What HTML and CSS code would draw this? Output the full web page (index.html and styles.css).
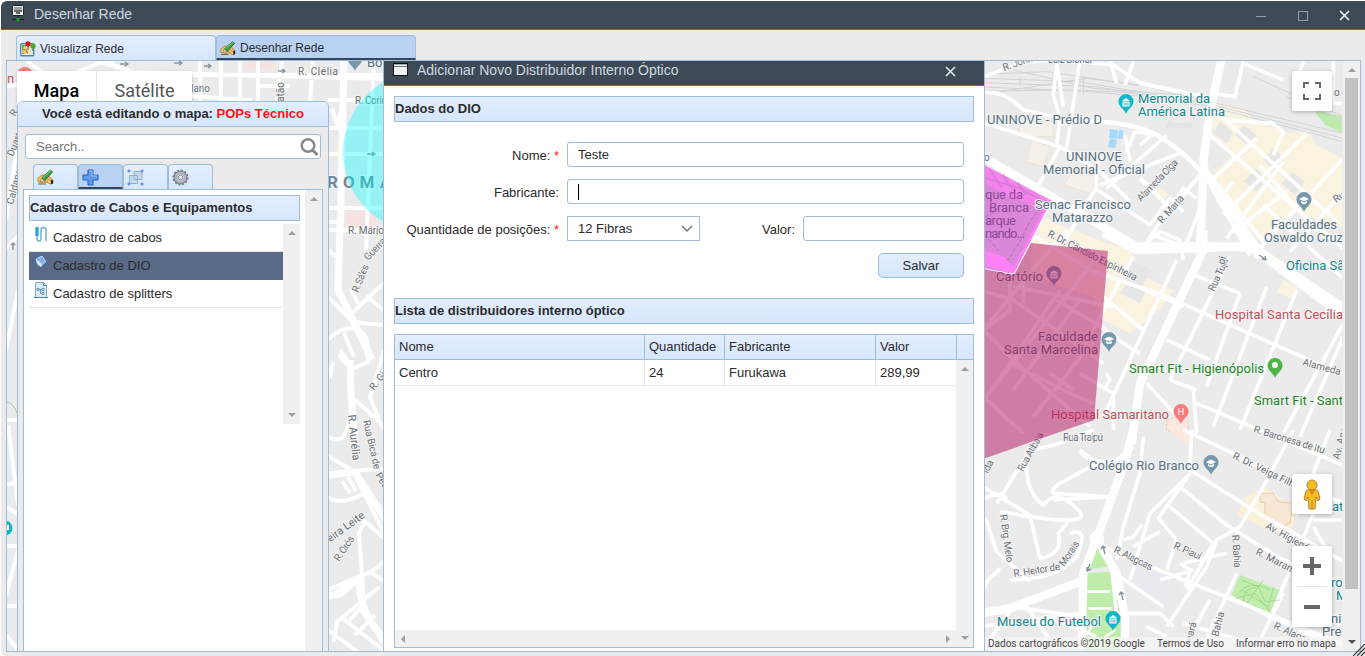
FILE: index.html
```html
<!DOCTYPE html>
<html lang="pt-BR">
<head>
<meta charset="utf-8">
<title>Desenhar Rede</title>
<link rel="stylesheet" href="styles.css">
</head>
<body>
<div class="window">
  <header class="titlebar">
    <svg class="title-icon" width="14" height="17" viewBox="0 0 14 17"><rect x="1.500" y=".5" width="11" height="10" rx="1" fill="#eee" stroke="#222"/><path d="M3 2h8v5H9v2H5V7H3z" fill="#666"/><path d="M4 2v3M6 2v3M8 2v3M10 2v3" stroke="#fff" stroke-width=".8"/><path d="M7 11v3M1 14.500h12" stroke="#1c2328" stroke-width="1.300"/><rect x="5.500" y="13" width="3" height="3" fill="#16a52c"/></svg>
    <h1>Desenhar Rede</h1>
    <svg class="win-buttons" width="100" height="14" viewBox="0 0 100 14"><path d="M2 8.500h10" stroke="#96a0a8"/><rect x="44.500" y="3.500" width="9" height="9" fill="none" stroke="#96a0a8"/><path d="M86 3l9 9M95 3l-9 9" stroke="#f4f6f7" stroke-width="1.600"/></svg>
  </header>

  <nav class="tabs">
    <div class="tab"><svg width="16" height="16" viewBox="0 0 16 16"><rect x=".7" y="2.700" width="13" height="12" rx="1" fill="#fff" stroke="#4786bd" stroke-width="1.400"/><path d="M2 4h4v9H2z" fill="#46ad36"/><path d="M4 4l6 6-5 4-3-3z" fill="#ebcb67"/><path d="M8 5l5 3v5l-4 1z" fill="#dbe7d0"/><path d="M2 8l4 1 2 4" stroke="#b87820" fill="none"/><path d="M8 5v4M13 6v4" stroke="#555"/><circle cx="8" cy="3" r="2.700" fill="#cd2020"/><circle cx="13" cy="5" r="2.700" fill="#55a529"/></svg>Visualizar Rede</div>
    <div class="tab active"><svg width="16" height="16" viewBox="0 0 17 16"><use href="#hand"/></svg>Desenhar Rede</div>
  </nav>

  <main class="workspace">
    <div class="map-view">
    <svg class="map" viewBox="7 61 1335 590">
      <defs>
        <g id="hand"><path d="M1 9l4-3 5 0 4 3 2 3v2l-3 1-3-2-4 1-5-1z" fill="#f8c873" stroke="#b87422" stroke-width=".8"/><path d="M9 9l5 3M7 11l4 2" stroke="#c07a22" stroke-width=".8"/><path d="M4.500 9l9-8 2 2-8 9z" fill="#37a143" stroke="#1c6a26" stroke-width=".8"/><path d="M6 8.500l8-7" stroke="#8edb80"/><path d="M3 12.500l1.500-3.500 3 3z" fill="#f5dcaa" stroke="#755" stroke-width=".5"/><path d="M1 15h8" stroke="#444" stroke-width=".8"/><path d="M14 11.500l2-1v4l-2 1z" fill="#222"/></g>
        <g id="pin"><path d="M0 12C-1.500 7-7.500 5-7.500-.5a7.500 7.500 0 0 1 15 0C7.500 5 1.500 7 0 12z"/></g>
        <g id="museum"><path d="M-4-1 0-4 4-1z" fill="#fff"/><path d="M-3 0h6v4h-6z" fill="none" stroke="#fff" stroke-width="1.200"/><path d="M-1 0v4M1 0v4" stroke="#fff"/></g>
        <g id="school"><path d="M-5-1 0-3.500 5-1 0 1.500z" fill="#fff"/><path d="M-3 1v2q3 2 6 0V1L0 2.500z" fill="#fff"/></g>
      </defs>
      <rect x="0" y="50" width="1365" height="610" fill="#ebebeb"/>
      <path d="M249 61h25v8h-28zM346 210l30 2v20l-31-4z" fill="#f6e3e1"/>

      <g class="roads">
        <path class="road" d="M0 88L40 81 75 73 104 61M27 61l20 15M108 61l30 18 54 17 60 4M98 61l35 11 250 7M192 75h190M200 61v40M221 61v40M240 61v40M258 61v40M282 61l-5 40M313 61l-3 42M260 86h30"/>
        <path class="road wide" d="M344 55L341 200 338 290 353 320 372 360"/>
        <path class="road" d="M328 100h60M328 128h60M328 154h60M328 208h60M328 230h60M374 60l-8 190M328 222h14M332 109l5 15 5-15M328 250q8 8 14 6M328 297l25 25 31 3M350 315l34-32M366 296l25 20M358 304l-7-15M328 340q14-15 28-11t12 28M344 333l10 24M340 350l10 14 1 35 4 62M339 355l8 10M352 369l16-7-1-14M384 350l-9 32-5 15 9 22M328 379q8-30 2-1M328 437q10 5 15 0l8-17M328 456l25 15 38-3M353 471l35 70M355 400l25 22 6 10M328 497q13 10 38-5M342 481l8 12M348 477l8 14M328 590l34-15-3-42 6-12 20 18M328 597l50-30 10-10M334 642l3-20 42-35M342 618l44 34M362 575l2 30 15 30M370 572l16 10M328 630l30 22M348 622l15-17M355 635l20-20"/>
        <path class="road wide" d="M328 475l27-3 32 50M328 596l12-2 18-15M358 578l5 32 24 35M350 360l1 35 5 66"/>
        <path class="road" d="M18 140L6 220M6 248l12-12M18 290L6 350M6 420h12M8 425l10 80M6 485l12-3M6 507l12 7M6 546h12M18 550L6 595M6 606h12M6 635l12 15"/>
      </g>
      <path d="M7 402q7 2 10 11" fill="none" stroke="#9fd2a0"/>
      <circle cx="25" cy="75" r="8" fill="#f67e7b"/>

      <!-- north-east quarter, three units per pixel -->
      <g transform="translate(980 55) scale(.33333)">
        <path d="M700 140L790 160 830 200 930 235 985 225 1010 270 1090 310V520L950 470 840 560 770 480 700 350 760 300 700 240z M540 400l25 15-15 25-25-20zM180 480l60 30 130 50 80 25 20 40-65 100-230-150z" fill="#faf3e0"/>
        <path d="M120 200h100v45h-105zM155 255l55 20-20 60-50-15zM280 350l75 15-25 50-80-25z" fill="#f5f0ea" stroke="#eee3d7" stroke-width="3"/>
        <path d="M390 222l24 4-3 25-24-3M417 226h14l-4 25h-14M390 250l20 4-4 26-22-4z" fill="#a5d8ff"/>
        <path d="M1000 165l90 20v50l-55-25z" fill="#bfecae"/>
        <path d="M790 210l40 30-30 30-35-30zM880 280l35 30-35 35-30-30zM935 350l40 30-30 40-40-35zM830 340l30 35-30 35-40-30zM720 200l40 35-20 30-40-30z" fill="#e6e6e6"/>
        <path class="rail" d="M10 58L200 50 500 95 730 150 1090 235M10 70L300 80 700 150 1090 250M10 83L350 95 690 155 1090 260M10 96L330 110 600 135M10 108L300 105 480 115M60 110L320 70 520 95M100 45L340 100 600 120M120 65v30M220 60v45M310 68v50M820 65l270 120M920 125l170 75"/>
        <g class="road-set">
          <path d="M15 65Q100 30 150 20L240 15 400 30 480 85M390 15l20 70M460 20l-25 70M0 115Q70 100 130 165L290 200M230 30l-10 90 20 70-10 80M300 15L260 280M230 25l20 130M15 205L240 275 360 350 450 440M240 275L170 400M440 290l25-60 60 10M480 270l40-35M450 320l-15-80M360 390L610 290M345 400l165 110 60-80 40 40M350 395L230 600M350 395q-5-70 20-90M480 370l50 40M380 400L560 240M560 480L660 360M500 560l110-160 40 30M520 540l130 50M480 580l60-50 60 25 10 60M660 460l-50 130M480 370l100 100"/>
          <path d="M690 240l410 350M720 180l350 320M870 200l40 30-30 70M740 195l130 10M980 235L730 480M1090 310L830 590M1090 410L930 590M830 250L690 380M910 320L740 550M760 530l160-120M690 360l160 200M850 450l250 230M690 390L810 600M840 330l170 200M760 380l-50 60M790 20l-25 105-70-10M790 25l120 50M970 20L950 80M1060 15v130h30"/>
        </g>
        <path class="primary" d="M0 300L470 575Q730 570 820 580L1100 790M725 10L690 170 670 320 675 350 830 580M670 350L660 580"/>
        <path class="primary thin" d="M280 200Q450 195 530 240T680 370M480 85l215 45"/>
        <path d="M560 205h75v15h-75zM565 192h8v15h-8z" fill="#e4e4e4"/>
      </g>

      <g transform="translate(980 230) scale(.33333)">
        <path d="M160 20l60 0 360 160-40 60-90 70-80-40-30-70-190-60zM910 150l45 20-25 35-40-20z" fill="#faf3e0"/>
        <path d="M455 90l60 30-30 50-50-20zM440 160l60 20-20 40-60-30z" fill="#e6e6e6"/>
        <g class="road-set">
          <path d="M150 10l180 110 230 80 540 240M260 0L0 310M360 70L20 500M460 80L300 370M590 90L370 560M750 80L570 450M780 190L680 470M860 170L700 590M950 180L780 600M1090 280L910 610M1090 320L960 620M630 130l150 60M610 230L450 160M370 200l120 100M330 270l130 90 20 10M560 330l130 60M570 450l80 30M500 460l120 130M650 520l450 190M300 430l100 60 0 110M640 480l10 130M380 430l10 20-20 30"/>
          <path d="M0 180l100 30L370 400M0 290l100 100 230 200M90 120L90 240L0 310M130 150v70M100 170l300 60M230 210l150 90M240 180L0 530M300 210L100 480M350 320L160 560M210 430l70 50M10 500l120 110M90 400l200 100 50 20"/>
        </g>
        <path class="primary" d="M370 10L470 60Q740 55 810 45L1100 240M670 0V60L480 460 455 640M780 0l60 80"/>
        <path d="M560 570l60-20 10 80-70-30z" fill="#fbe9df" stroke="#edc8b5" stroke-width="3" stroke-dasharray="7 4"/>
      </g>

      <g transform="translate(980 430) scale(.33333)">
        <path d="M800 195l60-20 90 60-20 90-160-70z" fill="#faf1da"/><path d="M840 190l40 0 15 25 45 5-10 60-25 10-50-30 0-40-15-5z" fill="#f8e7d5" stroke="#edcaac" stroke-width="3"/>
        <path d="M565 0l60 0 5 45-20-5z" fill="#fbe9df"/>
        <path d="M350 345l35 65-75 10zM315 430l75-5 35 65v180H300V470z" fill="#c1edac"/>
        <path d="M780 435l120 45-25 85-125-60z" fill="#c1edac"/>
        <path d="M470 400l90 30 15 90-30 20-90-90z" fill="#e7ebef"/>
        <g class="road-set">
          <path d="M0 165l150 90 30 130q70-10 55-75l30-35M80 220q0-40-55-20t-5 75l30 90 100 90M60 245l90 15q200 30 140-25-60-60-100-10-60-40-50-160L240 40 340 0M50 220l120-190M300 60q20 45 110 30l50-40M220 210l180-10M380 200L220 190q-10-10 20-30l110-60-50-40M490 20l-10 110-50 160L410 390M630 130l-120 120-60 200M430 330l30-10 25-35M460 350l80-45M340 325l40 30 70 30 720 290M270 310q60-20 20 70-60 70-200 70M0 500l20-45 40-40M0 670l100-140M100 530l200 30M140 530l90 130M0 590l300-40M200 560l150 60M630 130l-95 135 55 65M600 170l140 115 160 100 200 80M570 230l130 110-80 140M635 0L630 120 820 240 1100 400M1000 250L860 590M940 0L850 170 780 290 710 330 680 410 560 590M610 0l150 70 240 120 100 30M1050 0l-100 260M1000 270h100M590 330l-30 90M600 400l30 20-15 50M610 400l130-30M640 420L540 450M770 430L660 670M750 500l140 70 180 80M690 510l-90 160M910 490l-90 180M390 370l20 180 130 0 40 40M420 440l130 90M1000 290l40 70-80 230M940 520l160 70M610 580l200 60M500 590l60 30"/>
        </g>
        <path class="primary" d="M460 0L430 110 350 325 310 430 305 660M350 325L410 430 435 560V660M0 550l90-15 210-80"/>
        <path d="M315 485h75M325 535h70M320 615l20-35M375 620l30-20" stroke="#fff" stroke-width="8"/>
        <path d="M785 450l50 20 20 45 45-5M765 505l60-15 50 60M800 520l50-70M785 480l80 50 15-55M835 470q-50 5-45 45M770 495q40-50 100-15" fill="none" stroke="#91cb82" stroke-width="2"/>
        <circle cx="350" cy="325" r="22" fill="#fff"/>
      </g>

      <path class="arrows" d="M120 64h7m-2-2 3 2-3 2M174 63h7m-2-2 3 2-3 2M204 66h6m-2-2 3 2-3 2M278 71h6m-2-2 3 2-3 2M367 154h7m-2-2 3 2-3 2M1259 255l7 5m-4-1 4 1-1-4M1105 554l-2-8m-2 3 2-3 3 2M1123 600l-2-8m-2 3 2-3 3 2M1090 564l-3 7m0-4v4l4-2M13 250v-7m-2 2 2-2 2 2"/>

      <!-- park area, drawn below its labels -->
      <path d="M980 163L1052 201 1014 275 980 268z" fill="#db87d7"/>
      <path d="M980 163l72 38-8 11-21-11-15-4-23-15z" fill="#f583ee"/>
      <path d="M985 178l34 10 22 12M990 170l12 18M1003 175l10 15M1018 183l8 12" fill="none" stroke="#d77bd2" stroke-width="1.500"/>
      <path d="M1041 208q-12 12-20 32l-13 20-22-8M985 217l10-6M985 235l14 16" fill="none" stroke="#b06cae" stroke-dasharray="4 2"/>
      <path d="M985 251l18 5 12 12-1 6-29-8z" fill="#ff80f7"/>
      <path d="M1049 203L1012 273" stroke="#ff80f7" stroke-width="3"/>
      <path d="M1052 201L1014 275 980 268" fill="none" stroke="#fff" stroke-width="1.500"/>

      <g class="street">
        <text x="298" y="75" textLength="40">R. Clélia</text>
        <text x="355" y="104" textLength="32">R. Corio</text>
        <text x="348" y="234" textLength="36">R. Mário</text>
        <text transform="translate(358 293) rotate(-68)" textLength="29">R. Sáles</text>
        <text transform="translate(368 261) rotate(-46)" textLength="27">Guerra</text>
        <text transform="translate(284 102) rotate(-90)">atão</text>
        <text x="191" y="92" textLength="19">lano</text>
        <text transform="translate(15 117) rotate(-60)">R.</text>
        <text transform="translate(13 157) rotate(-68)">Duart</text>
        <text transform="translate(13 205) rotate(-75)" textLength="36">Caldana</text>
        <text class="major" transform="translate(348 415) rotate(84)" textLength="46">R. Aurélia</text>
        <text transform="translate(363 421) rotate(77)" textLength="50">Rua Bica de</text>
        <text transform="translate(375 475) rotate(58)">Pedra</text>
        <text transform="translate(374 391) rotate(-52)">R. Gi</text>
        <text class="major" transform="translate(317 552) rotate(-36)" textLength="60">Pereira Leite</text>
        <text transform="translate(339 562) rotate(-56)" textLength="28">R. Orós</text>
        <text transform="translate(1004 71) rotate(-19)" textLength="31">R. John</text>
        <text x="1048" y="63" textLength="44">Luiz Biondi</text>
        <text transform="translate(1141 202) rotate(-46)" textLength="54">Alameda Olga</text>
        <text transform="translate(1162 224) rotate(-48)" textLength="34">R. Marta</text>
        <text transform="translate(1047 236) rotate(27)" textLength="99">R. Dr. Cândido Espinheira</text>
        <text transform="translate(1214 292) rotate(-65)" textLength="35">Rua Tupi</text>
        <text transform="translate(1224 265) rotate(-75)">pi</text>
        <text transform="translate(1336 203) rotate(-35)">Rua</text>
        <text transform="translate(1302 365) rotate(15)" textLength="78">Alameda Eduardo</text>
        <text transform="translate(1253 432) rotate(17)" textLength="74">R. Baronesa de Itu</text>
        <text x="1063" y="441" textLength="40">Rua Traipú</text>
        <text transform="translate(1023 472) rotate(-61)" textLength="43">Rua Atibaia</text>
        <text transform="translate(988 474) rotate(-65)">ida</text>
        <text transform="translate(1232 458) rotate(26)" textLength="73">R. Dr. Veiga Filho</text>
        <text transform="translate(1265 528) rotate(29)" textLength="69">Av. Higienópolis</text>
        <text transform="translate(1255 554) rotate(27)" textLength="57">R. Maranhão</text>
        <text transform="translate(1173 548) rotate(24)" textLength="29">R. Piauí</text>
        <text transform="translate(1113 552) rotate(26)" textLength="42">R. Alagoas</text>
        <text transform="translate(1232 535) rotate(86)" textLength="33">R. Bahia</text>
        <text transform="translate(1273 628) rotate(25)" textLength="45">R. Alagoas</text>
        <text transform="translate(1000 515) rotate(82)" textLength="48">R. Brg. Melo</text>
        <text transform="translate(1014 577) rotate(-9)" textLength="47">R. Heitor de</text>
        <text transform="translate(1064 567) rotate(-56)" textLength="28">Morais</text>
        <text transform="translate(1190 648) rotate(-75)">Ceará</text>
        <text transform="translate(1218 637) rotate(-75)">Bahia</text>
        <text transform="translate(1339 460) rotate(-75)">Av. Ang</text>
        <text x="1334" y="96">o M</text>
        <text x="984" y="161">o</text>
      </g>
      <g class="poi">
        <text x="367" y="67">Bo</text>
        <text x="987" y="124" textLength="115">UNINOVE - Prédio D</text>
        <text x="1066" y="161" textLength="56">UNINOVE</text><text x="1043" y="174" textLength="102">Memorial - Oficial</text>
        <text x="1035" y="209" textLength="96">Senac Francisco</text><text x="1052" y="222" textLength="61">Matarazzo</text>
        <text x="1271" y="229" textLength="66">Faculdades</text><text x="1264" y="242" textLength="79">Oswaldo Cruz</text>
        <text x="996" y="281" textLength="47">Cartório</text>
        <text x="1038" y="341" textLength="60">Faculdade</text><text x="1004" y="354" textLength="94">Santa Marcelina</text>
        <text x="1089" y="470" textLength="110">Colégio Rio Branco</text>
        <text x="1331" y="623">ni</text><text x="1322" y="636">Pre</text>
        <text class="district" x="327" y="188">ROMA</text>
      </g>
      <g class="poi purple"><text x="985" y="199" textLength="38">que da</text><text x="989" y="212" textLength="40">Branca</text><text x="985" y="225" textLength="31">arque</text><text x="985" y="238" textLength="40">nando...</text></g>
      <g class="poi teal"><text x="1138" y="103" textLength="72">Memorial da</text><text x="1138" y="116" textLength="87">América Latina</text><text x="1286" y="270">Oficina São</text><text x="997" y="626" textLength="104">Museu do Futebol</text><text x="1332" y="511">at</text><text x="1331" y="587">ro</text><text x="1336" y="600">M</text></g>
      <g class="poi green"><text x="1129" y="373" textLength="135">Smart Fit - Higienópolis</text><text x="1254" y="405" textLength="89">Smart Fit - Sant</text></g>
      <g class="poi red"><text x="1215" y="319" textLength="128">Hospital Santa Cecília</text><text x="1051" y="419" textLength="118">Hospital Samaritano</text><text x="7" y="83">n</text></g>

      <g transform="translate(1126 102)"><use href="#pin" fill="#12b5cb"/><use href="#museum"/></g>
      <g transform="translate(1113 619)"><use href="#pin" fill="#12b5cb"/><use href="#museum"/></g>
      <g transform="translate(1304 200)"><use href="#pin" fill="#7698ac"/><use href="#school"/></g>
      <g transform="translate(1109 340)"><use href="#pin" fill="#7698ac"/><use href="#school"/></g>
      <g transform="translate(1211 463)"><use href="#pin" fill="#7698ac"/><use href="#school"/></g>
      <g transform="translate(1054 274)"><use href="#pin" fill="#7698ac"/><use href="#museum"/></g>
      <g transform="translate(1275 366)"><use href="#pin" fill="#4bb543"/><circle cy="-1" r="3" fill="#fff"/></g>
      <g transform="translate(1181 412)"><use href="#pin" fill="#f87c7c"/><text class="pin-letter" y="3">H</text></g>
      <g transform="translate(355 59)"><use href="#pin" fill="#7698ac"/></g>
      <circle cx="5" cy="528" r="7.500" fill="#12b5cb"/><rect x="5" y="525" width="4" height="5" fill="#fff"/>

      <!-- coverage areas -->
      <circle cx="424" cy="152" r="81" fill="#00ffff" fill-opacity=".36"/>
      <path d="M1031 243L1108 251 1094 420 980 460V268L1014 275z" fill="#b5105f" fill-opacity=".5"/>
    </svg>

    <div class="map-types"><span class="on">Mapa</span><span>Satélite</span></div>
    <button class="map-button fullscreen"><svg width="18" height="18" viewBox="0 0 18 18"><path d="M1 6V1h5M12 1h5v5M17 12v5h-5M6 17H1v-5" fill="none" stroke="#666" stroke-width="2"/></svg></button>
    <button class="map-button pegman"><svg width="18" height="31" viewBox="0 0 18 31"><path d="M6 10h6l3 2 2 8-2 2-2-4-1 12H6L5 18l-2 4-2-2 2-8z" fill="#fbbc1f" stroke="#a98332"/><circle cx="9" cy="6" r="5" fill="#fbbc1f" stroke="#a98332"/><path d="M6 11h6l-3 5z" fill="#e67e22"/><path d="M9 21v9" stroke="#a98332"/></svg></button>
    <div class="zoom"><button><svg width="18" height="18" viewBox="0 0 18 18"><path d="M0 9h18M9 0v18" stroke="#666" stroke-width="4"/></svg></button><button><svg width="18" height="18" viewBox="0 0 18 18"><path d="M1 9h16" stroke="#666" stroke-width="4"/></svg></button></div>
    <div class="attribution"><span>Dados cartográficos ©2019 Google</span><span>Termos de Uso</span><span>Informar erro no mapa</span></div>
    </div>
    <div class="scroll main-scroll"><i class="up"></i><b></b><i class="down dark"></i></div>

    <aside class="side">
      <h2>Você está editando o mapa: <em>POPs Técnico</em></h2>
      <div class="side-body">
        <div class="search"><span>Search..</span><svg width="20" height="20" viewBox="0 0 20 20"><circle cx="8" cy="8.500" r="6.300" fill="none" stroke="#888" stroke-width="2.500"/><path d="M12.500 13l5 5" stroke="#888" stroke-width="3"/></svg></div>
        <div class="tools">
          <span><svg width="17" height="16" viewBox="0 0 17 16"><use href="#hand"/></svg></span>
          <span class="active"><svg width="17" height="17" viewBox="0 0 17 17"><path d="M6 1h5v5h5v5h-5v5H6v-5H1V6h5z" fill="#5e9ae8" stroke="#245ec0"/><path d="M7 2h3v5h5" fill="none" stroke="#9cc7fa"/></svg></span>
          <span><svg width="17" height="17" viewBox="0 0 17 17"><path d="M7 2.500h8v8H7zM2.500 6.500h8v8h-8z" fill="#c6d8ef" stroke="#8fb0d5"/><g fill="#fff" stroke="#3f69d2"><circle cx="2" cy="2" r="1"/><circle cx="15" cy="2" r="1"/><circle cx="2" cy="15" r="1"/><circle cx="15" cy="15" r="1"/></g></svg></span>
          <span><svg width="17" height="17" viewBox="0 0 17 17"><circle cx="8.500" cy="8.500" r="7" fill="none" stroke="#777b87" stroke-width="2" stroke-dasharray="2 1.665"/><circle cx="8.500" cy="8.500" r="4.700" fill="#eef1f6" stroke="#b3b5be" stroke-width="3.400"/><circle cx="8.500" cy="8.500" r="6.400" fill="none" stroke="#777b87"/><circle cx="8.500" cy="8.500" r="2.300" fill="#e5efff" stroke="#888c96"/></svg></span>
        </div>
        <div class="side-content">
          <div class="catalog">
            <h3 class="section">Cadastro de Cabos e Equipamentos</h3>
            <div class="list-frame">
              <ul>
                <li><svg width="15" height="17" viewBox="0 0 15 17"><path d="M3 1v11q0 3 2 3t2-3V4q0-2.500 2.500-2.500T12 4v11" fill="none" stroke="#7aaec5" stroke-width="1.500"/><path d="M3 1v9" stroke="#28a5d8" stroke-width="3.300"/></svg>Cadastro de cabos</li>
                <li class="selected"><svg width="15" height="17" viewBox="0 0 15 17"><path d="M1 4l7-3 5 7-6 5.500-5-4z" fill="#87aee6" stroke="#315a91" stroke-width=".8"/><path d="M1.500 4.500l2 6L7 13l1-3z" fill="#dceaff"/><path d="M4 4l4-2 4 6" fill="none" stroke="#b8d4f8"/></svg>Cadastro de DIO</li>
                <li><svg width="15" height="17" viewBox="0 0 15 17"><path d="M1.500.5h8l3 3v12h-11z" fill="#d8ebf8" stroke="#83abc4"/><path d="M9.500.5v3h3M0 15.500h14" fill="none" stroke="#4d82a2"/><path d="M3 6.500h2v2H3zM8 6.500h2v2H8zM8 10.500h2v2H8zM5 7.500h3M6.500 7.500v4H8" fill="none" stroke="#6693b0" stroke-width=".9"/></svg>Cadastro de splitters</li>
              </ul>
              <div class="scroll"><i class="up"></i><i class="down"></i></div>
            </div>
          </div>
          <div class="scroll"><i class="up"></i></div>
        </div>
      </div>
    </aside>

    <section class="dialog">
      <header><svg width="15" height="13" viewBox="0 0 15 13"><rect x=".5" y=".5" width="14" height="12" fill="#f0f0f0" stroke="#111"/><path d="M1 1.500h13" stroke="#aaa"/><path d="M1 3.500h13" stroke="#777"/></svg><h2>Adicionar Novo Distribuidor Interno Óptico</h2><svg class="close" width="11" height="11" viewBox="0 0 11 11"><path d="M1 1l9 9M10 1l-9 9" stroke="#dfe4e7" stroke-width="1.700"/></svg></header>
      <div class="dialog-body">
        <h3 class="section">Dados do DIO</h3>
        <form>
          <label>Nome: <em>*</em></label><div class="field wide-field">Teste</div>
          <label>Fabricante:</label><div class="field wide-field"><span class="caret"></span></div>
          <label>Quantidade de posições: <em>*</em></label><div class="field select">12 Fibras<svg width="12" height="8" viewBox="0 0 12 8"><path d="M1 1l5 5 5-5" fill="none" stroke="#777" stroke-width="1.500"/></svg></div>
          <label>Valor:</label><div class="field"></div>
          <button type="button" class="save">Salvar</button>
        </form>
        <h3 class="section">Lista de distribuidores interno óptico</h3>
        <div class="grid">
          <div class="grid-row head"><span>Nome</span><span>Quantidade</span><span>Fabricante</span><span>Valor</span><span></span></div>
          <div class="grid-main">
            <div class="grid-left">
              <div class="grid-row"><span>Centro</span><span>24</span><span>Furukawa</span><span>289,99</span></div>
              <div class="hscroll"><i class="left"></i><i class="right"></i></div>
            </div>
            <div class="scroll"><i class="up"></i><i class="down"></i></div>
          </div>
        </div>
      </div>
    </section>
  </main>
  <svg class="grip" width="12" height="12" viewBox="0 0 12 12"><path d="M0 12L12 0M4 12l8-8M8 12l4-4" stroke="#333" stroke-width="1.200"/></svg>
</div>
</body>
</html>
```
FILE: styles.css
```css
* { box-sizing: border-box; }
body { margin: 0; width: 1365px; height: 656px; overflow: hidden; background: #fff; color: #2b2b2b; font: 13px "Liberation Sans", Arial, sans-serif; }
h1, h2, h3, ul { margin: 0; padding: 0; font-weight: normal; }
svg { display: block; flex: none; }
em { font-style: normal; }
button { padding: 0; border: 0; font: inherit; color: inherit; }

.window { position: relative; height: 655px; margin: 1px 0 0 1px; display: flex; flex-direction: column; background: #ebebeb; border-radius: 6px 0 0 6px; overflow: hidden; }
.titlebar { height: 29px; flex: none; display: flex; padding: 4px 11px 0 10px; background: #3d4a56; border-bottom: 1px solid #178ca8; color: #cdd8e0; }
.titlebar h1 { flex: 1; margin-left: 9px; font-size: 14px; line-height: 18px; }
.win-buttons { margin-top: 3px; }
.tabs { height: 30px; flex: none; display: flex; padding: 5px 0 0 15px; font-size: 12px; }
.tab { width: 200px; height: 25px; display: flex; align-items: center; gap: 4px; padding: 1px 4px 0 3px; border: 1px solid #9fbdd6; border-bottom: 0; border-radius: 4px 4px 0 0; background: linear-gradient(#e3eefe, #d6e6fd); }
.tab.active { background: #b9d2f4; border-bottom: 2px solid #34465a; }

.workspace { position: relative; width: 1355px; height: 592px; flex: none; display: flex; margin-left: 5px; border: 1px solid #9fbdd6; }
.map-view { position: relative; width: 1336px; height: 590px; overflow: hidden; }
.map { width: 1335px; height: 590px; }
.map path, .map circle { stroke-linejoin: round; }
.road, .road-set path { fill: none; stroke: #fff; }
.road { stroke-width: 4px; }
.road.wide { stroke-width: 7px; }
.road-set path { stroke-width: 11px; }
.primary { fill: none; stroke: #fff; stroke-width: 25px; }
.primary.thin { stroke-width: 13px; }
.rail { fill: none; stroke: #d0d4d7; stroke-width: 3px; }
.arrows { fill: none; stroke: #8997a3; stroke-width: 1.5px; }
.street, .poi { font-family: Roboto, sans-serif; paint-order: stroke; stroke: #f4f4f4; stroke-width: 2px; }
.street { font-size: 10px; fill: #6b7075; }
.street .major { font-size: 11px; }
.poi { font-size: 13px; fill: #577181; }
.poi.purple { fill: #8b4a93; stroke: none; }
.poi.teal { fill: #16858d; }
.poi.green { fill: #168722; }
.poi.red { fill: #bd5158; }
.district { font-size: 17px; font-weight: bold; letter-spacing: 5px; fill: #6f8797; }
.pin-letter { font: 9px Roboto, sans-serif; fill: #fff; text-anchor: middle; }

.map-types { position: absolute; left: 10px; top: 10px; display: flex; width: 175px; height: 40px; background: #fff; box-shadow: 0 1px 3px #0003; color: #555; font: 18px/40px Roboto, sans-serif; }
.map-types span { flex: 1; text-align: center; }
.map-types .on { flex: 0 0 80px; border-right: 1px solid #e6e6e6; color: #000; font-weight: 500; }
.map-button, .zoom { position: absolute; left: 1285px; width: 40px; background: #fff; border-radius: 2px; box-shadow: 0 1px 4px #0004; }
.map-button { height: 40px; display: flex; align-items: center; justify-content: center; }
.fullscreen { top: 10px; }
.pegman { top: 413px; }
.zoom { top: 485px; height: 81px; padding: 0 5px; }
.zoom button { width: 30px; height: 40px; display: flex; align-items: center; justify-content: center; background: #fff; }
.zoom button + button { height: 41px; border-top: 1px solid #e6e6e6; }
.attribution { position: absolute; left: 978px; right: 0; bottom: 0; height: 14px; display: flex; justify-content: space-between; padding: 0 7px 0 3px; background: #f5f5f5cc; font: 10px/14px Roboto, sans-serif; color: #444; }

.scroll { width: 17px; flex: none; display: flex; flex-direction: column; align-items: center; justify-content: space-between; padding: 7px 0; background: #f0f0f0; }
.scroll i, .hscroll i { width: 0; height: 0; border: 4px solid transparent; }
.scroll i.up { border-top: 0; border-bottom-color: #a0a0a0; }
.scroll i.down { border-bottom: 0; border-top-color: #a0a0a0; }
.scroll i.dark { border-top-color: #505050; }
.main-scroll { justify-content: flex-start; }
.main-scroll b { width: 13px; height: 511px; margin-top: 6px; background: #c1c1c1; }
.main-scroll i.down { margin-top: auto; }

.side { position: absolute; left: 10px; top: 40px; width: 312px; height: 551px; display: flex; flex-direction: column; background: #ebebeb; border: 1px solid #9fbdd6; border-radius: 6px 6px 0 0; overflow: hidden; }
.side > h2 { height: 25px; flex: none; border-bottom: 1px solid #9fbdd6; background: linear-gradient(#e3eefe, #d6e6fd); text-align: center; font: bold 13px/24px "Liberation Sans", Arial, sans-serif; }
.side > h2 em { color: #f11; }
.side-body { flex: 1; display: flex; flex-direction: column; padding: 7px 5px 0; }
.side-body .search { width: 296px; height: 25px; flex: none; display: flex; align-items: center; justify-content: space-between; margin-left: 2px; padding: 0 0 0 10px; border: 1px solid #9fbdd6; border-radius: 3px; background: #fff; color: #757575; }
.tools { display: flex; padding: 5px 0 0 10px; height: 30px; flex: none; }
.tools span { width: 45px; padding: 4px 3px; border: 1px solid #9fbdd6; border-bottom: 0; border-radius: 4px 4px 0 0; background: linear-gradient(#e3eefe, #d6e6fd); }
.tools .active { background: #b9d2f4; border-bottom: 2px solid #34465a; }
.side-content { flex: 1; width: 300px; display: flex; justify-content: space-between; border: 1px solid #9fbdd6; border-bottom: 0; background: #fff; }
.catalog { width: 276px; padding: 5px 0 0 5px; }
.section { height: 26px; line-height: 23px; border: 1px solid #9fbdd6; background: linear-gradient(#e3eefe, #d6e6fd); font-size: 13px; font-weight: bold; }
.list-frame { display: flex; margin-top: 3px; height: 200px; }
.list-frame ul { flex: 1; list-style: none; }
.list-frame li { height: 28px; display: flex; padding-left: 5px; gap: 4px; line-height: 27px; border-bottom: 1px solid #e5e5e5; }
.list-frame li svg { margin-top: 2px; }
.list-frame .selected { background: #5a6b88; border-color: #5a6b88; }

.dialog { position: absolute; left: 376px; top: 0; width: 602px; height: 590px; display: flex; flex-direction: column; background: #fff; border: solid #9fbdd6; border-width: 0 1px; }
.dialog > header { height: 25px; flex: none; display: flex; padding: 2px 28px 0 9px; background: #3d4a56; border-bottom: 1px solid #178ca8; color: #cdd8e0; }
.dialog > header h2 { flex: 1; margin-left: 9px; font-size: 14px; line-height: 14px; }
.close { margin-top: 3px; }
.dialog-body { padding: 10px; }
form { height: 176px; display: grid; grid-template: repeat(4, 25px) / 171px 133px 103px 161px; row-gap: 12px; padding: 20px 0 0 2px; }
form label { padding-right: 8px; text-align: right; line-height: 27px; }
form label em { color: #f22; }
.field { display: flex; align-items: center; justify-content: space-between; padding: 0 6px 0 10px; border: 1px solid #9fbdd6; border-radius: 3px; }
.wide-field { grid-column: 2 / 5; }
.select { border-radius: 0; }
.caret { width: 1px; height: 16px; background: #000; }
.save { grid-column: 4; justify-self: end; width: 86px; height: 25px; border: 1px solid #9fbdd6; border-radius: 5px; background: linear-gradient(#e3eefe, #d6e6fd); }
.grid { height: 314px; margin-top: 10px; border: 1px solid #9fbdd6; display: flex; flex-direction: column; }
.grid-row { height: 26px; flex: none; display: grid; grid-template-columns: 250px 80px 151px 80px; line-height: 25px; border-bottom: 1px solid #e8e8e8; }
.grid-row span { padding-left: 4px; border-right: 1px solid #e8e8e8; }
.grid-row span:nth-child(4) { border-right: 0; }
.grid-row.head { height: 25px; line-height: 24px; grid-template-columns: 250px 80px 151px 81px 16px; border-color: #9fbdd6; background: linear-gradient(#e3eefe, #d6e6fd); }
.grid-row.head span { border-color: #9fbdd6; }
.grid-row.head span:nth-child(4) { border-right: 1px solid #9fbdd6; }
.grid-row.head span:last-child { border: 0; }
.grid-main { flex: 1; display: flex; }
.grid-left { flex: 1; display: flex; flex-direction: column; justify-content: space-between; }
.hscroll { height: 17px; display: flex; align-items: center; justify-content: space-between; padding: 0 6px; background: #f0f0f0; }
.hscroll i.left { border-left: 0; border-right-color: #a0a0a0; }
.hscroll i.right { border-right: 0; border-left-color: #a0a0a0; }
.grip { position: absolute; right: 0; bottom: 0; }
```
